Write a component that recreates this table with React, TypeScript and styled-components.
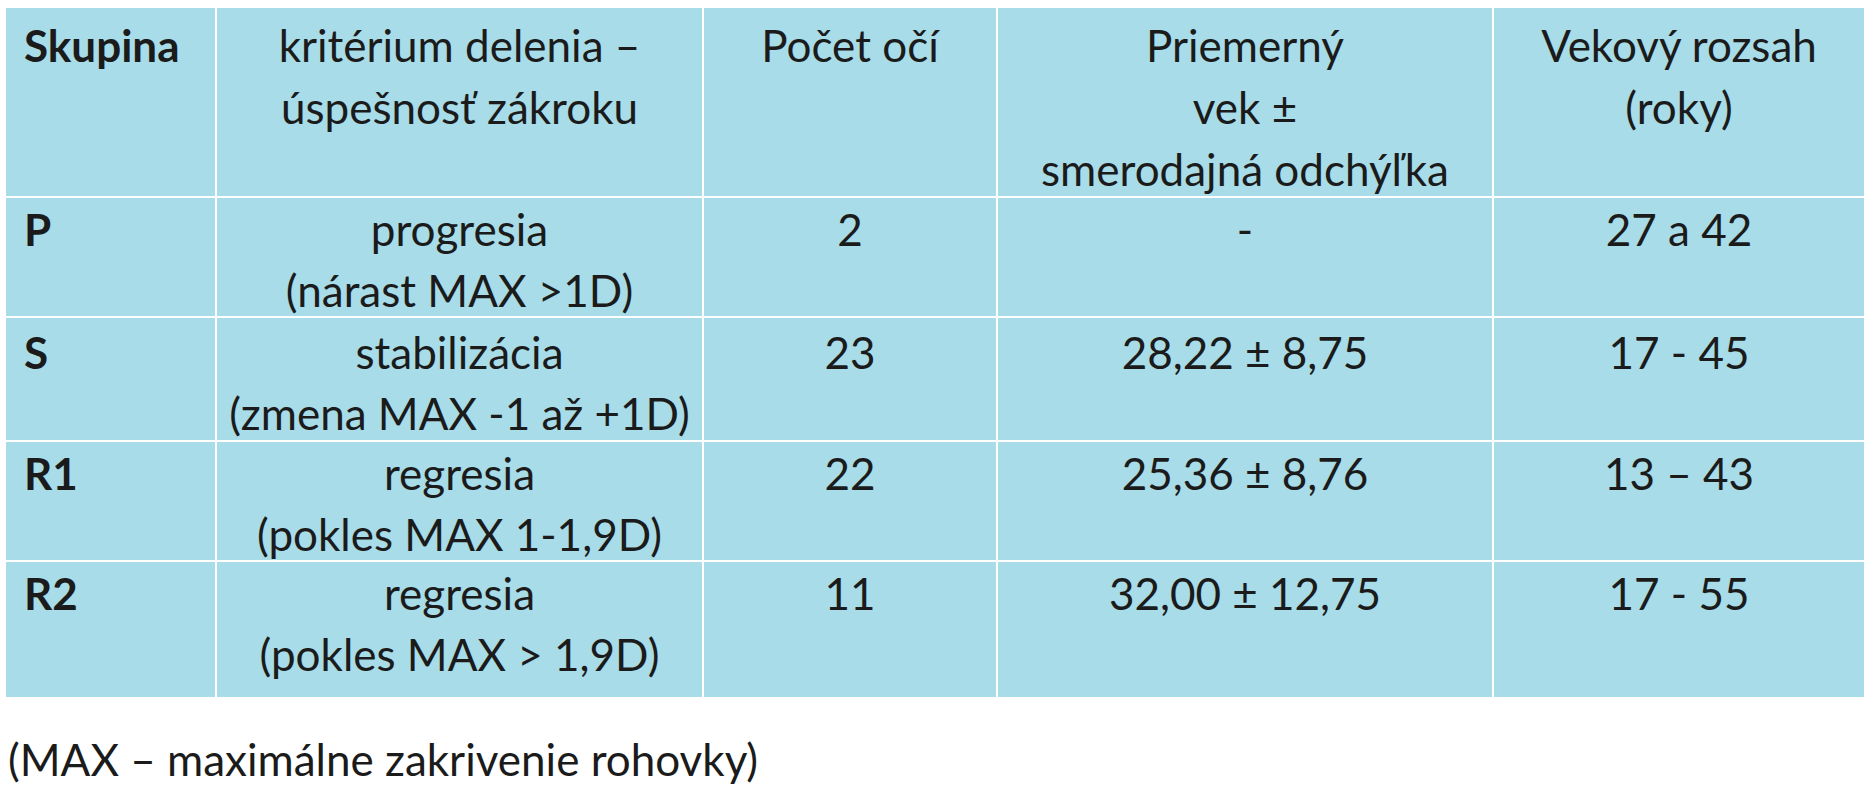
import React from "react";
import styled, { createGlobalStyle } from "styled-components";

const Global = createGlobalStyle`
  html, body { margin: 0; padding: 0; background: #ffffff; }
  body { font-family: Lato, "Open Sans", "DejaVu Sans", sans-serif; color: #1b1b1b; }
`;

const Page = styled.div`
  padding: 8px 0 0 6px;
  width: 1864px;
`;

const Table = styled.div`
  display: grid;
  grid-template-columns: 209px 485px 292px 494px 370px;
  grid-template-rows: 188px 118px 122px 118px 135px;
  gap: 2px;
  width: 1858px;
`;

const Cell = styled.div<{ $left?: boolean; $bold?: boolean; $pad?: number; $lh?: number }>`
  background: #a7dce8;
  font-size: 44px;
  line-height: ${(p) => p.$lh ?? 61}px;
  font-weight: ${(p) => (p.$bold ? 700 : 400)};
  text-align: ${(p) => (p.$left ? "left" : "center")};
  padding: ${(p) => p.$pad ?? 0}px 0 0 ${(p) => (p.$left ? 18 : 0)}px;
  white-space: nowrap;
  box-sizing: border-box;
`;

const Note = styled.div`
  margin-top: 32px;
  padding-left: 2px;
  font-size: 44px;
  line-height: 61px;
  white-space: nowrap;
`;

type Row = { group: string; crit: [string, string]; eyes: string; age: string; range: string; pad: number };

const rows: Row[] = [
  { group: "P", crit: ["progresia", "(nárast MAX >1D)"], eyes: "2", age: "-", range: "27 a 42", pad: 1 },
  { group: "S", crit: ["stabilizácia", "(zmena MAX -1 až +1D)"], eyes: "23", age: "28,22 ± 8,75", range: "17 - 45", pad: 4 },
  { group: "R1", crit: ["regresia", "(pokles MAX 1-1,9D)"], eyes: "22", age: "25,36 ± 8,76", range: "13 – 43", pad: 1 },
  { group: "R2", crit: ["regresia", "(pokles MAX > 1,9D)"], eyes: "11", age: "32,00 ± 12,75", range: "17 - 55", pad: 1 },
];

export default function App() {
  return (
    <Page>
      <Global />
      <Table>
        <Cell $left $bold $pad={6} $lh={62}>Skupina</Cell>
        <Cell $pad={6} $lh={62}>
          kritérium delenia –<br />úspešnosť zákroku
        </Cell>
        <Cell $pad={6} $lh={62}>Počet očí</Cell>
        <Cell $pad={6} $lh={62}>
          Priemerný<br />vek ±<br />smerodajná odchýľka
        </Cell>
        <Cell $pad={6} $lh={62}>
          Vekový rozsah<br />(roky)
        </Cell>
        {rows.map((r) => (
          <React.Fragment key={r.group}>
            <Cell $left $bold $pad={r.pad}>{r.group}</Cell>
            <Cell $pad={r.pad}>
              {r.crit[0]}
              <br />
              {r.crit[1]}
            </Cell>
            <Cell $pad={r.pad}>{r.eyes}</Cell>
            <Cell $pad={r.pad}>{r.age}</Cell>
            <Cell $pad={r.pad}>{r.range}</Cell>
          </React.Fragment>
        ))}
      </Table>
      <Note>(MAX – maximálne zakrivenie rohovky)</Note>
    </Page>
  );
}
